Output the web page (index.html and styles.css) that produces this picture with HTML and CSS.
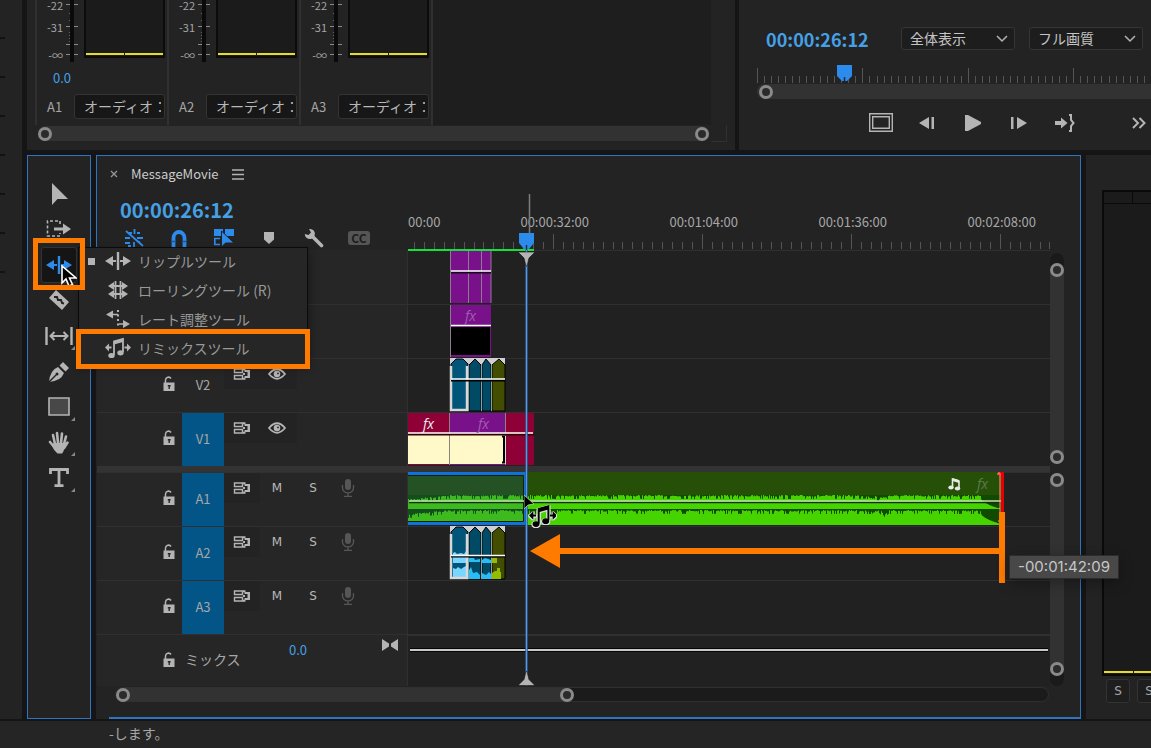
FILE: index.html
```html
<!DOCTYPE html>
<html lang="ja">

<head>
    <meta charset="UTF-8">
    <meta name="viewport" content="width=device-width, initial-scale=1.0">
    <title>MessageMovie</title>
    <link rel="stylesheet" href="styles.css">
</head>

<body>
    <!-- shared icons -->
    <svg class="defs" aria-hidden="true">
        <symbol id="i-lock" viewBox="0 0 12 16">
            <path d="M2.500 7V4a3 3 0 0 1 5.500-1.500" fill="none" stroke="#b4b4b4" stroke-width="1.500" />
            <path d="M.5 6.500h11v8.500H.5z" fill="#b4b4b4" />
            <path d="M4.800 9h2.800v1.500h-.7V13H5.500v-2.500h-.7z" fill="#262626" />
        </symbol>
        <symbol id="i-sync" viewBox="0 0 18 14">
            <path d="M1.500 2h8v3.500h-8zM1.500 8.500h8V12h-8z" fill="none" stroke="#b4b4b4" stroke-width="1.400" />
            <path d="M10 1.300h2.500V3H17v8h-4.500v1.800H10v-2h1.500V9H14.500V5h-3V3.300H10zM10 6h2v2h-2z" fill="#b4b4b4" />
        </symbol>
        <symbol id="i-eye" viewBox="0 0 18 12">
            <path d="M1 6Q9-3.500 17 6Q9 15.500 1 6z" fill="none" stroke="#b4b4b4" stroke-width="1.800" />
            <circle cx="9" cy="6" r="3.300" fill="#b4b4b4" />
            <circle cx="10" cy="5.400" r=".9" fill="#262626" />
        </symbol>
        <symbol id="i-mic" viewBox="0 0 14 20">
            <rect x="4" y="1" width="6" height="11" rx="3" fill="#565656" />
            <path d="M1.500 7v3a5.500 4.800 0 0 0 11 0V7M7 15v3M3 18.300h8" fill="none" stroke="#565656" stroke-width="1.300" />
        </symbol>
        <symbol id="i-ripple" viewBox="0 0 26 20">
            <path d="M13 1v18" fill="none" stroke="currentColor" stroke-width="2.400" />
            <path d="M0 10l8-5v4h3v2H8v4zM26 10l-8-5v4h-3v2h3v4z" fill="currentColor" />
        </symbol>
        <symbol id="i-remix" viewBox="0 0 26 22">
            <path d="M9 18V4.500l9-2.500v13" fill="none" stroke="currentColor" stroke-width="1.800" />
            <path d="M9 4l9-2.500v3.500l-9 2.500z" fill="currentColor" />
            <ellipse cx="6.500" cy="18.500" rx="3.200" ry="2.600" fill="currentColor" />
            <ellipse cx="15.500" cy="15.800" rx="3.200" ry="2.600" fill="currentColor" />
            <path d="M0 10.500l4-4v3h2.500v2H4v3zM26 10.500l-4-4v3h-2.500v2H22v3z" fill="currentColor" />
        </symbol>
        <symbol id="i-cursor" viewBox="0 0 16 22">
            <path d="M1 1v17l4-4 3 7 3.500-1.500-3-6.500H15z" fill="#000" stroke="#fff" stroke-width="1.600" />
        </symbol>
    </svg>

    <div class="app">
        <div class="workspace">
            <aside class="edge"></aside>
            <div class="panels">
                <div class="top">
                    <section class="panel mixer">
                        <div class="channels">
                            <div class="channel">
                                <div class="levels">
                                    <div class="scale"><span>-22</span><span>-31</span><span>-∞</span></div>
                                    <svg class="fader" width="14" height="64"></svg>
                                    <div class="meter"><i></i><i></i></div>
                                </div>
                                <div class="gain">0.0</div>
                                <div class="name"><label for="ch1">A1</label><input id="ch1" type="text" value="オーディオ：1"></div>
                            </div>
                            <div class="channel">
                                <div class="levels">
                                    <div class="scale"><span>-22</span><span>-31</span><span>-∞</span></div>
                                    <svg class="fader" width="14" height="64"></svg>
                                    <div class="meter"><i></i><i></i></div>
                                </div>
                                <div class="gain"></div>
                                <div class="name"><label for="ch2">A2</label><input id="ch2" type="text" value="オーディオ：2"></div>
                            </div>
                            <div class="channel">
                                <div class="levels">
                                    <div class="scale"><span>-22</span><span>-31</span><span>-∞</span></div>
                                    <svg class="fader" width="14" height="64"></svg>
                                    <div class="meter"><i></i><i></i></div>
                                </div>
                                <div class="gain"></div>
                                <div class="name"><label for="ch3">A3</label><input id="ch3" type="text" value="オーディオ：3"></div>
                            </div>
                        </div>
                        <div class="mixer-foot">
                            <div class="hbar"><b class="knob"></b><b class="knob"></b></div>
                            <div class="corner"></div>
                        </div>
                    </section>

                    <section class="panel monitor">
                        <div class="monitor-head">
                            <span class="timecode">00:00:26:12</span>
                            <select class="dropdown" aria-label="ズーム"><option>全体表示</option></select>
                            <select class="dropdown" aria-label="画質"><option>フル画質</option></select>
                        </div>
                        <div class="monitor-ruler">
                            <svg id="monitorTicks" width="100%" height="16"></svg>
                            <svg class="monitor-marker" width="16" height="17"><path d="M0 0h15v11l-5 5h-5l-5-5z" fill="#2d8ceb" /><path d="M7.500 12v4" stroke="#15304d" stroke-width="1.500" /></svg>
                        </div>
                        <div class="hbar"><b class="knob"></b></div>
                        <div class="transport">
                            <button aria-label="セーフマージン"><svg width="24" height="20"><path d="M.7.7h22.600v17.600H.7z" fill="none" stroke="#b4b4b4" stroke-width="1.400" /><path d="M3.700 3.700h16.600v11.600H3.700z" fill="none" stroke="#b4b4b4" stroke-width="1.400" /></svg></button>
                            <button aria-label="前のフレーム"><svg width="18" height="14"><path d="M1 7l10-6v12zM13.500 1H16v12h-2.500z" fill="#b4b4b4" /></svg></button>
                            <button aria-label="再生"><svg width="18" height="16"><path d="M1 0h3l13 7v2L4 16H1z" fill="#b4b4b4" /></svg></button>
                            <button aria-label="次のフレーム"><svg width="18" height="14"><path d="M1 1h2.500v12H1zM7 1l10 6-10 6z" fill="#b4b4b4" /></svg></button>
                            <button aria-label="アウトへ移動"><svg width="20" height="18"><path d="M0 7h6V3.500L12.500 9 6 14.500V11H0z" fill="#b4b4b4" /><path d="M14 1h2v5l2.500 3L16 12v5h-2" fill="none" stroke="#b4b4b4" stroke-width="2" /></svg></button>
                            <button class="more" aria-label="その他"><svg width="14" height="12"><path d="M1 1l5 5-5 5M7.500 1l5 5-5 5" fill="none" stroke="#b4b4b4" stroke-width="2" /></svg></button>
                        </div>
                    </section>
                </div>

                <div class="main">
                    <nav class="panel tools">
                        <div class="slot"><button aria-label="選択ツール"><svg width="26" height="26"><path d="M6 2v22l5.500-6H22z" fill="#b4b4b4" /></svg></button></div>
                        <div class="slot"><button aria-label="トラック選択ツール"><svg width="26" height="18"><path d="M14 4V1H1.500v15H14v-3" fill="none" stroke="#b4b4b4" stroke-width="1.600" stroke-dasharray="3 2" /><path d="M8 7.500h9v-4l8 5.500-8 5.500v-4H8z" fill="#b4b4b4" /></svg></button></div>
                        <div class="slot">
                            <button class="active" aria-label="リップルツール"><svg width="26" height="20"><use href="#i-ripple" /></svg></button>
                            <div class="menu">
                                <button class="checked"><svg width="26" height="20"><use href="#i-ripple" /></svg>リップルツール</button>
                                <button><svg width="26" height="20"><path d="M10.500 1v18M15.500 1v18M7 6h12M7 14h12" fill="none" stroke="#b4b4b4" stroke-width="1.800" /><path d="M3 6l6-4v8zM23 6l-6-4v8zM3 14l6-4v8zM23 14l-6-4v8z" fill="#b4b4b4" /></svg>ローリングツール (R)</button>
                                <button><svg width="26" height="20"><path d="M6 5.500h7M14 15h6" fill="none" stroke="#b4b4b4" stroke-width="1.600" /><path d="M1 5.500L8 1.500v8zM25 15l-7-4v8z" fill="#b4b4b4" /><path d="M13 1v18" fill="none" stroke="#b4b4b4" stroke-width="2" stroke-dasharray="2 2.500" /></svg>レート調整ツール</button>
                                <button class="picked"><svg width="26" height="22"><use href="#i-remix" /></svg>リミックスツール</button>
                            </div>
                            <svg class="cursor" width="16" height="22"><use href="#i-cursor" /></svg>
                            <span class="callout"></span>
                        </div>
                        <div class="slot"><button aria-label="レーザーツール"><svg width="24" height="24"><path d="M9 2l13 12-7 8L2 10z" fill="#b4b4b4" /><path d="M7 9l3 0 1 3 3 0 1 3 2 .5" fill="none" stroke="#232323" stroke-width="2" /></svg></button></div>
                        <div class="slot more-tools"><button aria-label="スリップツール"><svg width="28" height="20"><path d="M1.500 1v18M26.500 1v18" stroke="#b4b4b4" stroke-width="2.400" /><path d="M7 10h14M9.500 6L5.500 10l4 4M18.500 6l4 4-4 4" fill="none" stroke="#b4b4b4" stroke-width="2" /></svg></button></div>
                        <div class="slot"><button aria-label="ペンツール"><svg width="22" height="22"><path d="M1 21Q2 9 10 6l6 6Q13 20 1 21zM11.500 4.500L15 1l6 6-3.500 3.500z" fill="#b4b4b4" /><path d="M1 21l7-7" stroke="#232323" stroke-width="1.500" /><circle cx="9" cy="13" r="1.500" fill="#232323" /></svg></button></div>
                        <div class="slot more-tools"><button aria-label="長方形ツール"><svg width="22" height="20"><path d="M1 1h20v17H1z" fill="#484848" stroke="#b4b4b4" stroke-width="1.600" /></svg></button></div>
                        <div class="slot more-tools"><button aria-label="手のひらツール"><svg width="22" height="24"><path d="M7 13L5 4M10 12L9 2M13 12l1-9.500M16 13l2-7.500M2 11l5 6M19.500 11.500L16 17" fill="none" stroke="#b4b4b4" stroke-width="2.600" stroke-linecap="round" /><path d="M5.500 12h11.500q0 7-3 10.500H9.500Q6 20 4 15z" fill="#b4b4b4" /></svg></button></div>
                        <div class="slot more-tools"><button aria-label="文字ツール"><svg width="22" height="22"><path d="M2.500 7V2.500h17V7M11 2.500v16M6.500 18.700h9" fill="none" stroke="#b4b4b4" stroke-width="2.800" /></svg></button></div>
                    </nav>

                    <section class="panel timeline">
                        <div class="tabs">
                            <button class="close" aria-label="閉じる"><svg width="8" height="8"><path d="M1 1l6 6M7 1L1 7" stroke="#9a9a9a" stroke-width="1.200" /></svg></button>
                            <span class="tab">MessageMovie</span>
                            <button aria-label="メニュー"><svg width="12" height="11"><path d="M0 1h12M0 5.500h12M0 10h12" stroke="#b4b4b4" stroke-width="1.300" /></svg></button>
                        </div>
                        <div class="sequence">
                            <div class="heads">
                                <div class="seq-head">
                                    <span class="timecode large">00:00:26:12</span>
                                    <div class="seq-tools">
                                        <button aria-label="ネスト"><svg width="20" height="18"><path d="M10.500 0v5M5 4h3M13 4h3M1 9h5M13 9h6M1 14h5M10 13v5M14 13h2M4 17h3" stroke="#2d8ceb" stroke-width="1.800" /><path d="M2 2l17 15" stroke="#2d8ceb" stroke-width="1.800" /></svg></button>
                                        <button aria-label="スナップ"><svg width="18" height="18"><path d="M3.500 18V9a5.500 6 0 0 1 11 0v9" fill="none" stroke="#2d8ceb" stroke-width="3.800" /><path d="M1.600 12.500h3.800M12.600 12.500h3.800" stroke="#1b5796" stroke-width="1.500" /></svg></button>
                                        <button aria-label="リンクされた選択"><svg width="20" height="18"><path d="M0 0h9v7H0zM11 0h9v7h-9z" fill="#2d8ceb" /><path d="M6 9.500H.8v6H6" fill="none" stroke="#2d8ceb" stroke-width="1.600" /><path d="M7.500 2v16l4-4H20z" fill="#2d8ceb" stroke="#232323" /></svg></button>
                                        <button aria-label="マーカー"><svg width="12" height="12"><path d="M1 0h10v7.500L6 12 1 7.500z" fill="#b4b4b4" /></svg></button>
                                        <button aria-label="設定"><svg width="20" height="20"><path d="M8 8l9.500 9.500" stroke="#b4b4b4" stroke-width="3.600" stroke-linecap="round" /><path d="M5 1a5 5 0 0 1 5.500 7L8 10.500A5 5 0 0 1 .8 6l3.700 1L7 4.500z" fill="#b4b4b4" /></svg></button>
                                        <button class="cc" aria-label="キャプション">CC</button>
                                    </div>
                                </div>
                                <div class="head"></div>
                                <div class="head"></div>
                                <div class="head video"><svg class="lock" width="12" height="16"><use href="#i-lock" /></svg><span class="target off">V2</span><div class="opts"><svg width="18" height="14"><use href="#i-sync" /></svg><svg width="18" height="12"><use href="#i-eye" /></svg></div></div>
                                <div class="head video"><svg class="lock" width="12" height="16"><use href="#i-lock" /></svg><span class="target">V1</span><div class="opts"><svg width="18" height="14"><use href="#i-sync" /></svg><svg width="18" height="12"><use href="#i-eye" /></svg></div></div>
                                <div class="split"></div>
                                <div class="head"><svg class="lock" width="12" height="16"><use href="#i-lock" /></svg><span class="target">A1</span><div class="opts"><svg width="18" height="14"><use href="#i-sync" /></svg><button>M</button><button>S</button><svg width="14" height="20"><use href="#i-mic" /></svg></div></div>
                                <div class="head"><svg class="lock" width="12" height="16"><use href="#i-lock" /></svg><span class="target">A2</span><div class="opts"><svg width="18" height="14"><use href="#i-sync" /></svg><button>M</button><button>S</button><svg width="14" height="20"><use href="#i-mic" /></svg></div></div>
                                <div class="head"><svg class="lock" width="12" height="16"><use href="#i-lock" /></svg><span class="target">A3</span><div class="opts"><svg width="18" height="14"><use href="#i-sync" /></svg><button>M</button><button>S</button><svg width="14" height="20"><use href="#i-mic" /></svg></div></div>
                                <div class="head mix"><svg class="lock" width="12" height="16"><use href="#i-lock" /></svg><span class="mix-name">ミックス</span><span class="mix-gain">0.0</span><svg class="bow" width="16" height="12"><path d="M0 0l7 4.500v3L0 12zM16 0L9 4.500v3l7 4.500z" fill="#b4b4b4" /></svg></div>
                            </div>

                            <div class="stage">
                                <div class="ruler">
                                    <div class="labels"><span>00:00</span><span>00:00:32:00</span><span>00:01:04:00</span><span>00:01:36:00</span><span>00:02:08:00</span></div>
                                    <svg id="seqTicks" width="100%" height="16"></svg>
                                </div>
                                <div class="lane">
                                    <svg class="clips">
                                        <path d="M42 1h41v52H42z" fill="#78118a" />
                                        <path d="M42.500 1v52M60.500 1v52M73.500 1v52M83 1v52" stroke="#8d7a92" />
                                        <path d="M43 22.500h40" stroke="#1c0520" stroke-width="2" /><path d="M43 21h40" stroke="#fff" stroke-width="1.500" />
                                    </svg>
                                </div>
                                <div class="lane">
                                    <svg class="clips">
                                        <path d="M42 1h41v52H42z" fill="#78118a" />
                                        <path d="M43 23h39v28H43z" /><path d="M42 21.500h41" stroke="#fff" stroke-width="1.500" />
                                        <path d="M42.500 1v52" stroke="#8d7a92" />
                                    </svg>
                                    <span class="fx dim fx-v3">fx</span>
                                </div>
                                <div class="lane">
                                    <svg class="clips">
                                        <path d="M42 0h55v8H42z" fill="#cfcfcf" />
                                        <path d="M43 53V6l5-5h7l5 5v47z" fill="#005578" stroke="#000" />
                                        <path d="M43 8v44h16V8" fill="none" stroke="#d8d8d8" stroke-width="2.500" />
                                        <path d="M61 53V7l6-6 6 6v46zM74 53V7l4-6 5 6v46z" fill="#004a66" stroke="#000" />
                                        <path d="M84 53V7l7-6 6 6v46z" fill="#434d00" stroke="#000" />
                                        <path d="M60.500 7v46M73.500 7v46M83.500 7v46" stroke="#8c9da4" />
                                        <path d="M43 22.500h54" stroke="#000" stroke-width="2" /><path d="M43 21h54" stroke="#fff" stroke-width="1.500" />
                                    </svg>
                                </div>
                                <div class="lane">
                                    <svg class="clips">
                                        <path d="M0 1h41v52H0zM98 1h28v52H98z" fill="#8f0036" />
                                        <path d="M42 1h55v52H42z" fill="#78118a" />
                                        <path d="M0 23h41v29H0zM42 23h55v29H42z" fill="#fff8c9" />
                                        <path d="M41.500 1v52M97.500 1v52" stroke="#8a8480" />
                                        <path d="M0 22.500h126" stroke="#300" stroke-width="2" /><path d="M0 21h125" stroke="#fff" stroke-width="1.500" />
                                        <path d="M94 24.500h2v26h-2" fill="none" stroke="#000" stroke-width="2" />
                                        <path d="M97.500 24v28" stroke="#ddd" />
                                    </svg>
                                    <span class="fx fx-v1">fx</span><span class="fx dim fx-v1b">fx</span>
                                </div>
                                <div class="split"></div>
                                <div class="lane">
                                    <svg class="clips">
                                        <path d="M0 0h594v53H0z" fill="#264f08" />
                                        <path d="M0 23h594v30H0z" fill="#114a00" />
                                        <path id="waveTop" fill="#45d400" />
                                        <path id="waveBottom" fill="#45d400" />
                                        <path d="M0 0h118v53H0z" fill="#26608a" opacity=".22" />
                                        <path d="M0 1.500h117.500v50H0" fill="none" stroke="#1070dc" stroke-width="3" />
                                        <path d="M0 3.500h115.500v46H0" fill="none" stroke="#0c2208" />
                                        <path d="M1 30.500h592" stroke="#0f3304" stroke-width="1.500" /><path d="M1 29h592" stroke="#c2dcb4" stroke-width="1.600" />
                                        <path d="M590 0h6v40h-3V4h-3z" fill="#e60000" />
                                        <path d="M590 3V1h2v48h-2" fill="none" stroke="#ff9a84" />
                                        <path d="M544.500 16V7l6.500 2v8" fill="none" stroke="#e8e8e8" stroke-width="1.600" />
                                        <ellipse cx="543" cy="15.500" rx="2.700" ry="2" fill="#e8e8e8" /><ellipse cx="549.500" cy="16.500" rx="2.700" ry="2" fill="#e8e8e8" />
                                        <path d="M544.500 6l6.500 2v3l-6.500-2z" fill="#e8e8e8" />
                                    </svg>
                                    <span class="fx dim fx-a1">fx</span>
                                </div>
                                <div class="lane">
                                    <svg class="clips">
                                        <path d="M42 0h55v8H42z" fill="#cfcfcf" />
                                        <path d="M43 53V6l5-5h7l5 5v47z" fill="#005578" stroke="#000" />
                                        <path d="M61 53V7l6-6 6 6v46zM74 53V7l4-6 5 6v46z" fill="#004a66" stroke="#000" />
                                        <path d="M84 53V7l7-6 6 6v46z" fill="#434d00" stroke="#000" />
                                        <path d="M45 27l2-1 2 2 4-1 3 1 2-3v12H45zM45 42l3 1 2-2 3 2 3-2 2-1v12H45z" fill="#78d6ff" />
                                        <path d="M61 32h5l1 2 5-1v3H61zM61 44l2-3 2 6 4-1 3 3v4H61zM74 34l3-2 6 2v3h-9zM74 47l4 2 3-3 2 2v5h-9z" fill="#27bdf5" />
                                        <path d="M84 32h5v5h-5zM84 47l3-2h2v-3h3v4h1v7h-9z" fill="#93bd00" />
                                        <path d="M43 8v44h16V8" fill="none" stroke="#d8d8d8" stroke-width="2.500" />
                                        <path d="M60.500 7v46M73.500 7v46M83.500 7v46" stroke="#8c9da4" />
                                        <path d="M43 30.500h54" stroke="#000" stroke-width="2" /><path d="M43 29.500h54" stroke="#fff" stroke-width="1.500" />
                                    </svg>
                                </div>
                                <div class="lane"></div>
                                <div class="lane mix"><hr></div>

                                <div class="rendered"></div>
                                <svg class="playhead" width="26" height="492">
                                    <path d="M13.500 0v40" stroke="#7c7c7c" stroke-width="1.500" />
                                    <path d="M10.500 56v436" stroke="#2b5c96" stroke-width="2.500" /><path d="M10.500 56v436" stroke="#5799de" />
                                    <path d="M3 39h15v10l-5 6H8l-5-6z" fill="#2d8ceb" /><path d="M10.500 51v5" stroke="#15304d" stroke-width="1.500" />
                                    <path d="M2 58h17l-6 6-2 8h-1l-2-8z" fill="#b4b4b4" stroke="#111" stroke-width=".6" />
                                    <path d="M2 491.500h17l-6-6-2-8h-1l-2 8z" fill="#b4b4b4" stroke="#111" stroke-width=".6" />
                                </svg>
                                <svg class="drag" width="490" height="90">
                                    <path d="M6 56l30-17v34z" fill="#ff7b00" />
                                    <path d="M36 56h442" stroke="#ff7b00" stroke-width="6" />
                                    <path d="M478 17v71" stroke="#ff7b00" stroke-width="6" />
                                    <path d="M0 0v14l4-4 6-1z" fill="#000" stroke="#b5d8a0" stroke-width=".8" />
                                </svg>
                                <svg class="remix-halo" width="28" height="24" viewBox="-1 -1 28 24"><use href="#i-remix" /></svg>
                                <div class="tip">-00:01:42:09</div>
                            </div>

                            <div class="vbars">
                                <div class="vbar upper"><b class="knob"></b><b class="knob"></b></div>
                                <div class="vbar lower"><b class="knob"></b><b class="knob"></b></div>
                            </div>
                        </div>
                        <div class="seq-scroll"><div class="hbar"><b class="knob"></b><b class="knob"></b></div></div>
                    </section>

                    <section class="panel output">
                        <div class="output-meter">
                            <div class="clip-lights"><i></i><i></i></div>
                            <div class="output-level"><i></i><i></i></div>
                        </div>
                        <div class="solo"><button>S</button><button>S</button></div>
                    </section>
                </div>
            </div>
        </div>
        <footer class="status">-します。</footer>
    </div>

    <script src="script.js"></script>
</body>

</html>
```

FILE: styles.css
```css
:root {
    --bg: #151515;
    --panel: #232323;
    --lane: #212121;
    --line: #303030;
    --text: #a6a6a6;
    --icon: #b4b4b4;
    --blue: #2d8ceb;
    --code: #45a0e6;
    --focus: #2f74c0;
    --mark: #ff7b00;
}

* {
    box-sizing: border-box;
}

body {
    margin: 0;
    background: var(--bg);
    color: var(--text);
    font-family: "Noto Sans CJK JP", "Noto Sans", sans-serif;
    font-size: 14px;
    line-height: 20px;
    overflow: hidden;
}

button {
    display: flex;
    align-items: center;
    justify-content: center;
    padding: 0;
    border: 0;
    background: none;
    color: inherit;
    font: inherit;
}

svg {
    display: block;
    flex: none;
}

.defs {
    position: absolute;
    width: 0;
    height: 0;
}

.app {
    display: flex;
    flex-direction: column;
    min-height: 100vh;
}

.workspace {
    display: flex;
    flex: 1;
    gap: 5px;
}

.edge {
    width: 22px;
    background: repeating-linear-gradient(transparent 0 37px, #121212 37px 39px, transparent 39px 39px) 0 0 / 5px 276px no-repeat, var(--panel);
}

.panels {
    display: flex;
    flex: 1;
    flex-direction: column;
    gap: 5px;
    min-width: 0;
}

.panel {
    background: var(--panel);
}

.top {
    display: flex;
    gap: 4px;
    height: 150px;
}

/* audio mixer */
.mixer {
    width: 63%;
    padding-left: 8px;
    overflow: hidden;
}

.channels {
    display: flex;
    height: 125px;
    background: linear-gradient(#1e1e1e, #1e1e1e) right / calc(100% - 397px) 100% no-repeat;
    margin-right: 24px;
}

.channel {
    width: 132px;
    border-left: 2px solid var(--line);
}

.channel:last-child {
    width: 134px;
    border-right: 2px solid var(--line);
}

.levels {
    display: flex;
    height: 64px;
}

.scale {
    display: flex;
    flex-direction: column;
    gap: 12px;
    width: 26px;
    font-size: 11px;
    line-height: 10px;
    text-align: right;
}

.scale span:last-child {
    margin-top: 6px;
}

.fader {
    margin: 0 5px 0 2px;
}

.meter {
    display: flex;
    gap: 1px;
    align-items: flex-end;
    width: 81px;
    height: 58px;
    padding-bottom: 1px;
    border: 2px solid #0c0c0c;
    border-top: 0;
    background: #1b1b1b;
}

.meter i,
.output-level i {
    flex: 1;
    height: 2px;
    background: #e6dc2a;
}

.gain {
    height: 30px;
    padding-left: 16px;
    line-height: 28px;
    font-size: 13px;
    color: var(--code);
}

.name {
    display: flex;
    align-items: center;
    justify-content: space-between;
    padding: 0 2px 0 10px;
    font-size: 13px;
}

.name input {
    width: 91px;
    height: 25px;
    padding: 0 3px 2px 9px;
    border: 1px solid #333;
    border-radius: 3px;
    background: #171717;
    color: #b8b8b8;
    font: inherit;
    font-size: 14px;
}

.mixer-foot {
    display: flex;
    gap: 2px;
    padding-left: 3px;
}

.hbar {
    display: flex;
    justify-content: space-between;
    align-items: center;
    flex: 1;
    height: 15px;
    border-radius: 8px;
    background: #323232;
}

.mixer-foot .hbar {
    flex: none;
    width: 671px;
    margin-top: 1px;
}

.corner {
    width: 16px;
    height: 17px;
    border: 1px solid var(--line);
    border-width: 0 1px 1px 0;
}

.knob {
    width: 14px;
    height: 14px;
    border: 3px solid #8a8a8a;
    border-radius: 50%;
    background: #2b2b2b;
}

/* program monitor */
.monitor {
    flex: 1;
    min-width: 0;
    padding: 26px 0 0 18px;
    overflow: hidden;
}

.monitor-head {
    display: flex;
    align-items: center;
    gap: 14px;
    height: 25px;
    padding-left: 9px;
}

.timecode {
    width: 121px;
    color: var(--code);
    font-size: 18px;
    font-weight: 700;
}

.timecode.large {
    width: auto;
    font-size: 20px;
    line-height: 24px;
}

.dropdown {
    width: 114px;
    height: 23px;
    padding: 0 8px 2px;
    border: 1px solid #353535;
    border-radius: 3px;
    appearance: none;
    color: #c4c4c4;
    font: inherit;
    line-height: 20px;
    background: #1d1d1d url("data:image/svg+xml,%3Csvg xmlns='http://www.w3.org/2000/svg' width='12' height='8'%3E%3Cpath d='M1 1l5 5 5-5' fill='none' stroke='%23b4b4b4' stroke-width='1.500'/%3E%3C/svg%3E") no-repeat right 6px center;
}

.monitor-ruler {
    position: relative;
    height: 16px;
    margin-top: 17px;
}

.monitor-marker {
    position: absolute;
    left: 80px;
    top: -3px;
}

.monitor .hbar {
    padding-left: 2px;
    border-radius: 8px 0 0 8px;
}

.transport {
    display: flex;
    align-items: center;
    gap: 16px;
    height: 48px;
    padding: 0 4px 0 109px;
}

.transport button {
    width: 30px;
    height: 24px;
}

.transport .more {
    width: 16px;
    margin-left: auto;
}

/* tools */
.main {
    display: flex;
    flex: 1;
    gap: 5px;
}

.tools {
    position: relative;
    z-index: 2;
    display: grid;
    grid-template-rows: repeat(9, 1fr);
    align-self: stretch;
    width: 64px;
    padding: 20px 0 222px;
    border: 1px solid var(--focus);
}

.slot {
    position: relative;
    display: grid;
}

.slot > button {
    width: 62px;
}

.more-tools::after {
    content: "";
    position: absolute;
    right: 15px;
    bottom: 4px;
    border: 2px solid;
    border-color: transparent #888 #888 transparent;
}

.slot > .active {
    justify-self: center;
    width: 36px;
    border: 1px solid #333;
    border-radius: 3px;
    background: #151515;
    color: var(--blue);
}

.menu {
    position: absolute;
    left: 50px;
    top: 0;
    width: 230px;
    border: 1px solid #0b0b0b;
    background: #262626;
    box-shadow: 2px 3px 8px rgba(0, 0, 0, 0.3);
}

.menu button {
    position: relative;
    justify-content: flex-start;
    gap: 7px;
    width: 100%;
    height: 29px;
    padding: 0 0 3px 26px;
    color: #999;
}

.menu svg {
    color: var(--icon);
}

.menu .checked::before {
    content: "";
    position: absolute;
    left: 9px;
    width: 7px;
    height: 7px;
    background: var(--icon);
}

.menu .picked::after,
.callout {
    content: "";
    position: absolute;
    border: 5px solid var(--mark);
}

.menu .picked::after {
    inset: -6px -3px -5px -3px;
}

.cursor {
    position: absolute;
    left: 33px;
    top: 18px;
}

.callout {
    left: 5px;
    top: -9px;
    width: 52px;
    height: 52px;
}

/* timeline */
.timeline {
    position: relative;
    flex: 1;
    min-width: 0;
    padding-left: 1px;
    border: 1px solid var(--focus);
    border-width: 1px 1px 0 0;
}

.timeline::before,
.timeline::after {
    content: "";
    position: absolute;
    background: var(--focus);
}

.timeline::before {
    left: 0;
    top: 0;
    width: 1px;
    height: 92px;
}

.timeline::after {
    left: 13px;
    right: 0;
    bottom: 0;
    height: 2px;
}

.tabs {
    display: flex;
    align-items: center;
    gap: 13px;
    height: 38px;
    padding: 0 0 2px 13px;
}

.tab {
    color: #ccc;
    font-size: 13px;
}

.sequence {
    display: grid;
    grid-template-columns: 311px 1fr 30px;
}

.seq-head,
.ruler {
    height: 56px;
}

.seq-head {
    padding: 4px 0 0 23px;
}

.seq-tools {
    display: flex;
    gap: 15px;
    height: 30px;
    margin-left: -1px;
}

.seq-tools button {
    width: 30px;
    height: 30px;
    margin-top: 1px;
}

.seq-tools .cc {
    width: 22px;
    height: 14px;
    margin: 9px 0 0 4px;
    border-radius: 3px;
    background: #555;
    color: #1c1c1c;
    font-size: 12px;
    font-weight: 700;
    line-height: 14px;
}

.head {
    display: flex;
    height: 54px;
    padding-left: 66px;
    border-top: 1px solid var(--line);
    border-right: 1px solid var(--line);
    background: #262626;
}

.seq-head + .head {
    border-top-color: transparent;
}

.lock {
    margin-top: 17px;
}

.target {
    width: 42px;
    margin-left: 7px;
    background: #045587;
    line-height: 52px;
    text-align: center;
    font-size: 13px;
}

.target.off {
    background: none;
}

.opts {
    display: flex;
    align-items: center;
    align-self: flex-start;
    height: 30px;
    padding-left: 9px;
    gap: 16px;
    color: #b8b8b8;
    background: linear-gradient(var(--panel), var(--panel)) 0 0 / 36px 100% no-repeat;
}

.video .opts {
    gap: 17px;
    width: 73px;
    background-size: 100% 100%;
}

.opts button {
    width: 20px;
    height: 20px;
    font-family: "DejaVu Sans", sans-serif;
    font-size: 12px;
}

.opts > svg:last-child {
    margin-left: 2px;
}

.video .opts > svg:last-child {
    margin-left: 0;
}

.split {
    height: 6px;
    background: #333;
}

.mix {
    height: 52px;
}

.mix-name {
    width: 104px;
    margin: 14px 0 0 10px;
}

.mix-gain {
    margin-top: 5px;
    color: var(--code);
    font-size: 13px;
}

.bow {
    margin: 4px 9px 0 auto;
}

.stage {
    position: relative;
    z-index: 1;
    min-width: 0;
}

.ruler {
    display: flex;
    flex-direction: column;
    justify-content: space-between;
    overflow: hidden;
}

.labels {
    display: flex;
    margin-top: 18px;
    font-size: 13px;
}

.labels span {
    flex: none;
    width: 149px;
    text-align: right;
}

.labels span:first-child {
    width: 32px;
}

.lane {
    position: relative;
    height: 54px;
    border-top: 1px solid var(--line);
    background: var(--lane);
}

.clips {
    width: 100%;
    height: 54px;
    margin-top: -1px;
}

.lane.mix {
    height: 52px;
    border-top-width: 2px;
}

.lane hr {
    height: 4px;
    margin: 12px 2px 0;
    border: 1px solid #050505;
    border-width: 1px 0;
    background: #c8c8c8;
}

.fx {
    position: absolute;
    top: 1px;
    color: #eee;
    font-family: "Open Sans", sans-serif;
    font-size: 14px;
    font-style: italic;
}

.fx.dim {
    color: #a45cb0;
}

.fx-v3 {
    left: 57px;
}

.fx-v1 {
    left: 15px;
}

.fx-v1b {
    left: 70px;
}

.fx.fx-a1 {
    left: 569px;
    color: #5e7a4a;
}

.rendered {
    position: absolute;
    left: 0;
    top: 55px;
    width: 126px;
    height: 2px;
    background: #14e23c;
}

.playhead {
    position: absolute;
    left: 108px;
    top: 0;
}

.drag {
    position: absolute;
    left: 116px;
    top: 301px;
}

.remix-halo {
    position: absolute;
    left: 120px;
    top: 309px;
    color: #000;
    filter: drop-shadow(1px 0 0 #ddd) drop-shadow(-1px 0 0 #ddd) drop-shadow(0 1px 0 #ddd);
}

.tip {
    position: absolute;
    left: 601px;
    top: 361px;
    padding: 0 8px;
    border: 1px solid #2c2c2c;
    background: #484848;
    box-shadow: 0 4px 14px rgba(0, 0, 0, 0.3);
    color: #c6c6c6;
    font-family: Inter, sans-serif;
    font-size: 15px;
    line-height: 22px;
    white-space: nowrap;
}

.vbars {
    display: flex;
    flex-direction: column;
    gap: 9px;
    padding: 59px 0 0;
}

.vbar {
    display: flex;
    flex-direction: column;
    justify-content: space-between;
    width: 14px;
    height: 211px;
    border-radius: 7px;
    background: #323232;
}

.vbar.upper {
    padding-top: 10px;
    background: linear-gradient(#1a1a1a 18px, #323232 18px);
}

.vbar.lower {
    height: 213px;
    padding-bottom: 10px;
    background: linear-gradient(#323232 195px, #1a1a1a 195px);
}

.seq-scroll {
    margin: 1px 31px 0 18px;
    border: 1px solid var(--line);
    border-radius: 8px;
    background: #1b1b1b;
}

.seq-scroll .hbar {
    width: 458px;
    height: 13px;
}

/* output meters */
.output {
    width: 65px;
    padding: 35px 0 0 16px;
    overflow: hidden;
}

.output-meter {
    width: 62px;
    border: 2px solid #0a0a0a;
    background: #1b1b1b;
}

.clip-lights {
    display: flex;
    height: 12px;
    border-bottom: 1px solid #0a0a0a;
}

.clip-lights i {
    flex: 1;
    border-right: 1px solid #0a0a0a;
}

.output-level {
    display: flex;
    gap: 1px;
    align-items: flex-end;
    height: 470px;
    padding-bottom: 1px;
}

.solo {
    display: flex;
    gap: 7px;
    margin: 3px 0 0 4px;
}

.solo button {
    flex: none;
    width: 24px;
    height: 24px;
    border: 1px solid #333;
    border-radius: 3px;
    background: #1e1e1e;
    font-family: "DejaVu Sans", sans-serif;
    font-size: 12px;
}

.status {
    height: 29px;
    padding: 1px 0 0 109px;
    border-top: 2px solid var(--bg);
    background: #252525;
    line-height: 22px;
}
```

FILE: script.js
```js
// ruler ticks: every 15th one is tall
function drawTicks(id, start, step, tall, count) {
    let d = "";
    for (let i = 0; i < count; i++) {
        const x = Math.round(start + i * step) + 0.5;
        const major = i % 15 === 0;
        d += `M${x} ${major ? 0 : 16 - tall}V15`;
    }
    document.getElementById(id).innerHTML = `<path d="${d}" stroke="#555"/>`;
}

drawTicks("monitorTicks", 0, 7.03, 8, 80);
drawTicks("seqTicks", -4, 9.93, 8, 66);

document.querySelectorAll(".fader").forEach((fader) => {
    fader.innerHTML = `
        <path d="M1 4.500h12M1 26.500h12M1 44.500h12M1 54.500h12" stroke="#8a8a8a"/>
        <path d="M4 13.500h4M4 20.500h4M4 32.500h4M4 35.500h4M4 38.500h4M4 41.500h4" stroke="#666"/>
        <path d="M5 0h4v62H5z" fill="#0a0a0a"/>`;
});

// audio waveform, one column per pixel
let seed = 7;

function random() {
    seed = (seed * 16807) % 2147483647;
    return seed / 2147483647;
}

function drawWave(id, top, base) {
    let d = `M0 ${base}`;
    for (let x = 0; x < 592; x++) {
        const noise = random();
        let y = top + noise * 2 + (noise > 0.8 ? 2 : 0);
        if (x < 40) y += (40 - x) / 10;
        if (x > 460 && x < 480) y += random() * 3;
        if (x > 572) y = Math.min(base - 1, top + 2 + Math.sqrt((x - 572) * 7));
        d += `L${x} ${y.toFixed(1)}H${x + 1}`;
    }
    document.getElementById(id).setAttribute("d", d + `V${base}z`);
}

drawWave("waveTop", 23, 37);
drawWave("waveBottom", 38, 53);
```
